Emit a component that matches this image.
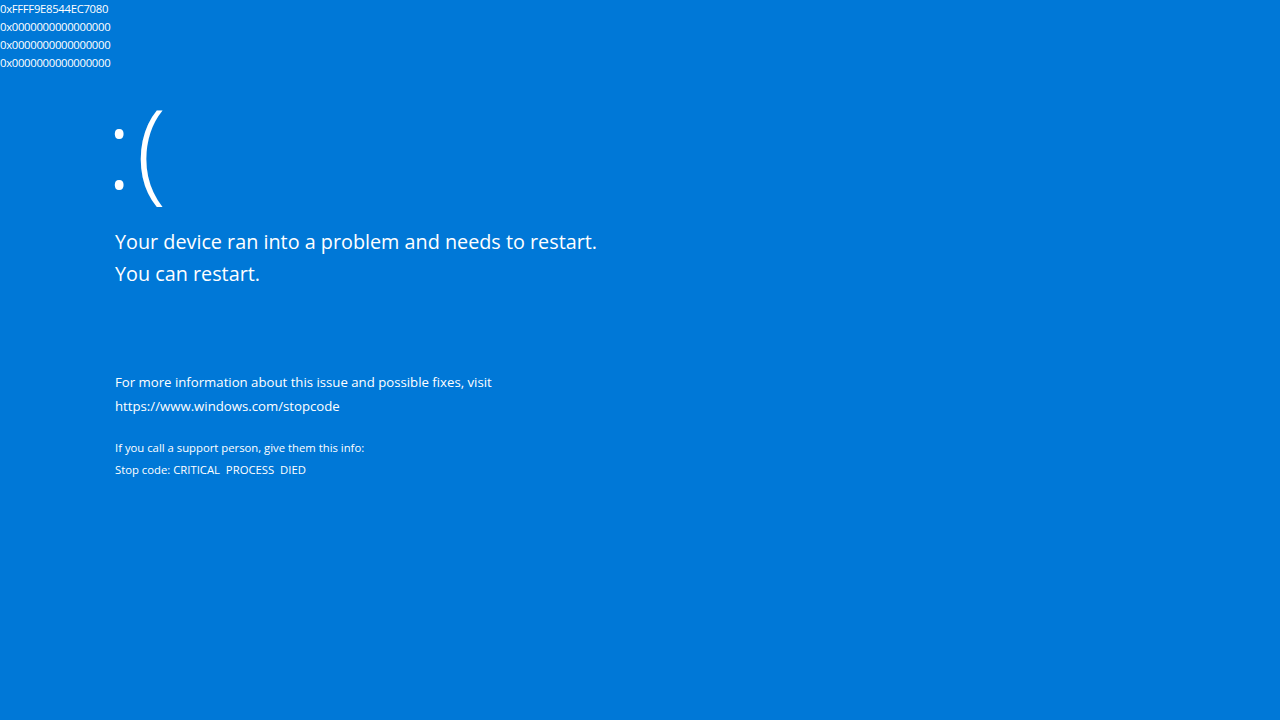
export default function App() {
  const codes = ["0xFFFF9E8544EC7080", "0x0000000000000000", "0x0000000000000000", "0x0000000000000000"];

  return (
    <div className="w-[1280px] h-[720px] bg-[#0078d7] text-white overflow-hidden font-['Open_Sans','Noto_Sans',sans-serif]">
      {/* parameter dump */}
      <div className="text-[11.3px] leading-[18px] tracking-[-0.3px]">
        {codes.map((c, i) => (
          <div key={i}>{c}</div>
        ))}
      </div>

      <div className="pl-[115px] pt-[14px]">
        <div className="-ml-[9px] text-[110px] leading-[120px] font-light tracking-[4px]">:(</div>

        <div className="mt-[20px] text-[19.8px] leading-[32px]">
          <p>Your device ran into a problem and needs to restart.</p>
          <p>You can restart.</p>
        </div>

        <div className="mt-[80px] text-[13.2px] leading-[24px]">
          <p>For more information about this issue and possible fixes, visit</p>
          <p>https://www.windows.com/stopcode</p>
        </div>

        <div className="mt-[19px] text-[11.3px] leading-[22px]">
          <p>If you call a support person, give them this info:</p>
          <p>Stop code: CRITICAL&nbsp; PROCESS&nbsp; DIED</p>
        </div>
      </div>
    </div>
  );
}
